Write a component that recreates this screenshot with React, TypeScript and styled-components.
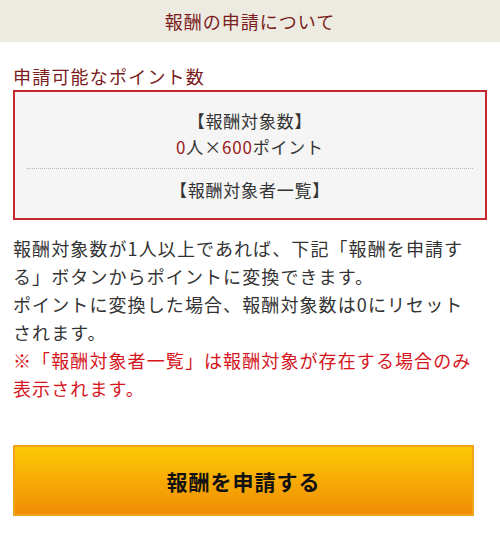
import styled, { createGlobalStyle } from "styled-components";

const GlobalStyle = createGlobalStyle`
  * {
    box-sizing: border-box;
  }
  body {
    margin: 0;
    background: #ffffff;
    font-family: "Noto Sans CJK JP", "Noto Sans", sans-serif;
    color: #333333;
  }
`;

const App = () => {
  return (
    <Page>
      <GlobalStyle />
      <HeaderBar>報酬の申請について</HeaderBar>
      <Main>
        <SectionTitle>申請可能なポイント数</SectionTitle>
        <PointBox>
          <BoxLine>【報酬対象数】</BoxLine>
          <BoxLine>
            <Accent>0</Accent>人×<Accent>600</Accent>ポイント
          </BoxLine>
          <Divider />
          <BoxLine>【報酬対象者一覧】</BoxLine>
        </PointBox>
        <Description>
          報酬対象数が1人以上であれば、下記「報酬を申請する」ボタンからポイントに変換できます。
          <br />
          ポイントに変換した場合、報酬対象数は0にリセットされます。
          <br />
          <Notice>※「報酬対象者一覧」は報酬対象が存在する場合のみ表示されます。</Notice>
        </Description>
        <ApplyButton type="button">報酬を申請する</ApplyButton>
      </Main>
    </Page>
  );
};

const Page = styled.div`
  width: 500px;
  min-height: 540px;
`;

const HeaderBar = styled.div`
  height: 42px;
  display: flex;
  align-items: center;
  justify-content: center;
  background: #edeae1;
  color: #7a1c1c;
  font-size: 18px;
  letter-spacing: 1px;
`;

const Main = styled.div`
  padding: 22px 13px 0 13px;
`;

const SectionTitle = styled.h2`
  margin: 0 0 2px 0;
  font-size: 18px;
  font-weight: 400;
  line-height: 24px;
  letter-spacing: 1.2px;
  color: #7a1c1c;
`;

const PointBox = styled.div`
  border: 2px solid #c5292e;
  background: #f5f5f5;
  padding: 16px 12px 15px 12px;
  text-align: center;
`;

const BoxLine = styled.div`
  font-size: 17px;
  line-height: 26px;
  letter-spacing: 0.8px;
  color: #333333;
`;

const Accent = styled.span`
  color: #9b1b1b;
`;

const Divider = styled.hr`
  margin: 8px 0 8px 0;
  border: none;
  border-top: 1px dotted #bbbbbb;
`;

const Description = styled.p`
  margin: 14px 0 0 0;
  padding-right: 10px;
  font-size: 18px;
  line-height: 28px;
  letter-spacing: 1.1px;
  color: #333333;
`;

const Notice = styled.span`
  color: #d5141c;
`;

const ApplyButton = styled.button`
  display: flex;
  align-items: center;
  justify-content: center;
  width: 461px;
  height: 71px;
  margin-top: 43px;
  border: 2px solid #f0a318;
  background: linear-gradient(to bottom, #fdca05, #f08c05);
  font-family: "Noto Sans CJK JP", "Noto Sans", sans-serif;
  font-size: 21px;
  font-weight: 700;
  letter-spacing: 1px;
  color: #111111;
  cursor: pointer;
`;

export default App;
